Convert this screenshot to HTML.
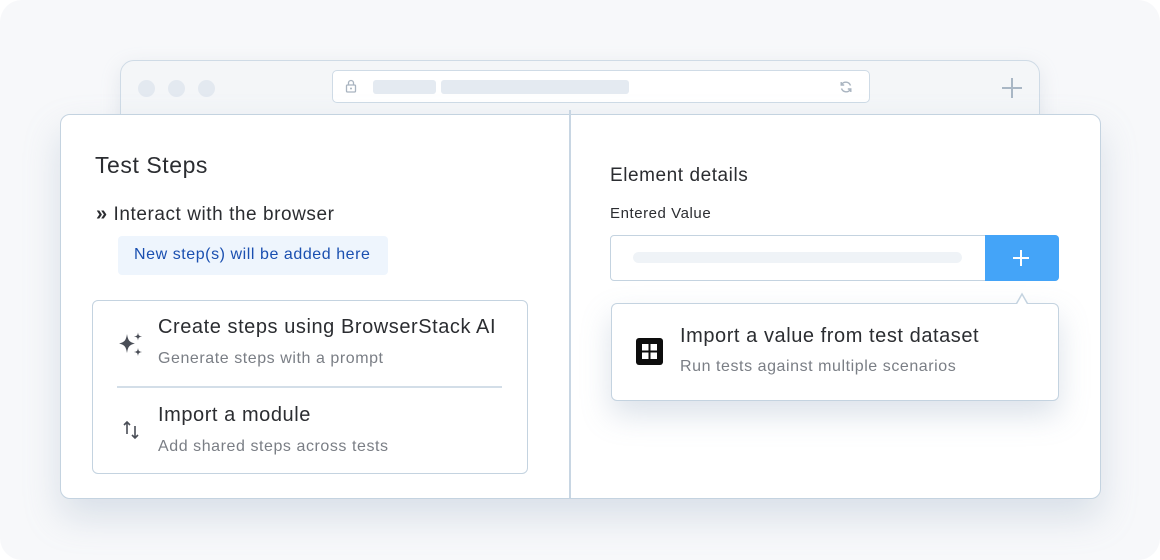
<!DOCTYPE html>
<html><head><style>
*{margin:0;padding:0;box-sizing:border-box}
body{width:1160px;height:560px;background:#fff;font-family:"Liberation Sans",sans-serif;overflow:hidden;position:relative;letter-spacing:0.035em}
.bg{position:absolute;left:0;top:0;width:1160px;height:560px;background:#f7f8fa;border-radius:22px}
.frame{position:absolute;left:120px;top:60px;width:920px;height:80px;background:#f4f6f8;border:1.5px solid #cfdbe6;border-radius:14px;box-shadow:0 6px 20px rgba(150,165,185,.2)}
.dot{position:absolute;top:19px;width:17px;height:17px;border-radius:50%;background:#e3e9f0}
.url{position:absolute;left:211px;top:9px;width:538px;height:33px;background:#fff;border:1.5px solid #cfdbe6;border-radius:5px}
.bar{position:absolute;top:9px;height:14px;background:#e4eaf1;border-radius:3px}
.card{position:absolute;left:60px;top:114px;width:1041px;height:385px;background:#fff;border:1.5px solid #c4d3e0;border-radius:10px;box-shadow:0 18px 36px rgba(140,160,185,.28)}
.div{position:absolute;left:569px;top:110px;width:1.5px;height:388px;background:#c8d6e3}
.t{position:absolute;color:#2b2d31;white-space:nowrap}
.s{position:absolute;color:#7a7e85;white-space:nowrap;font-size:16px}
</style></head><body>
<div class="bg"></div>
<div class="frame">
 <div class="dot" style="left:17px"></div><div class="dot" style="left:47px"></div><div class="dot" style="left:77px"></div>
 <div class="url">
  <svg style="position:absolute;left:12px;top:8px" width="12" height="14" viewBox="0 0 12 14"><rect x="1.5" y="6" width="9" height="7" rx="1" fill="none" stroke="#a9b4c0" stroke-width="1.3"/><path d="M3.5 6V4a2.5 2.5 0 0 1 5 0v2" fill="none" stroke="#a9b4c0" stroke-width="1.3"/><circle cx="6" cy="9.5" r="1" fill="#a9b4c0"/></svg>
  <div class="bar" style="left:40px;width:63px"></div><div class="bar" style="left:108px;width:188px"></div>
  <svg style="position:absolute;left:506px;top:9px" width="14" height="14" viewBox="0 0 14 14"><path d="M11.5 5.5A5 5 0 0 0 2.6 4.5M2.5 8.5a5 5 0 0 0 8.9 1" fill="none" stroke="#a9b4c0" stroke-width="1.4"/><path d="M2.2 2v3h3M11.8 12V9h-3" fill="none" stroke="#a9b4c0" stroke-width="1.4"/></svg>
 </div>
 <svg style="position:absolute;left:880px;top:16px" width="22" height="22" viewBox="0 0 22 22"><path d="M11 1v20M1 11h20" stroke="#a9b7c5" stroke-width="2"/></svg>
</div>
<div class="card"></div>
<div class="div"></div>

<div class="t" style="left:95px;top:152px;font-size:23px">Test Steps</div>
<div class="t" style="left:96px;top:203px;font-size:19px"><b style="font-size:20px">»</b>&nbsp;Interact with the browser</div>
<div style="position:absolute;left:118px;top:236px;width:270px;height:39px;background:#eef5fd;border-radius:4px;color:#1a4fb0;font-size:16px;padding:10px 0 0 16px;white-space:nowrap">New step(s) will be added here</div>
<div style="position:absolute;left:92px;top:300px;width:436px;height:174px;border:1.5px solid #c4d3e0;border-radius:6px;background:#fff"></div>
<div style="position:absolute;left:117px;top:386px;width:385px;height:1.5px;background:#d3dee8"></div>
<svg style="position:absolute;left:118px;top:331px" width="28" height="28" viewBox="0 0 28 28" fill="#4a4e57"><path d="M9 3C10 9 11 11 17 12.5 11 14 10 16 9 22 8 16 7 14 1 12.5 7 11 8 9 9 3Z"/><path d="M20 1.5C20.5 4.5 21 5 24 5.5 21 6 20.5 6.5 20 9.5 19.5 6.5 19 6 16 5.5 19 5 19.5 4.5 20 1.5Z"/><path d="M20 17C20.5 20 21 20.5 24 21 21 21.5 20.5 22 20 25 19.5 22 19 21.5 16 21 19 20.5 19.5 20 20 17Z"/></svg>
<div class="t" style="left:158px;top:316px;font-size:20px">Create steps using BrowserStack AI</div>
<div class="s" style="left:158px;top:350px">Generate steps with a prompt</div>
<svg style="position:absolute;left:122px;top:420px" width="18" height="20" viewBox="0 0 18 20" fill="none" stroke="#4a4e57" stroke-width="1.6"><path d="M5 14V2M2 5l3-3 3 3M13 6v12M10 15l3 3 3-3"/></svg>
<div class="t" style="left:158px;top:404px;font-size:20px">Import a module</div>
<div class="s" style="left:158px;top:438px">Add shared steps across tests</div>

<div class="t" style="left:610px;top:165px;font-size:19px">Element details</div>
<div class="t" style="left:610px;top:205px;font-size:15px">Entered Value</div>
<div style="position:absolute;left:610px;top:235px;width:449px;height:46px;border:1.5px solid #c4d3e0;border-radius:4px;background:#fff"></div>
<div style="position:absolute;left:633px;top:252px;width:329px;height:11px;background:#eff3f7;border-radius:6px"></div>
<div style="position:absolute;left:985px;top:235px;width:74px;height:46px;background:#44a4f8;border-radius:0 4px 4px 0"></div>
<svg style="position:absolute;left:1012px;top:249px" width="18" height="18" viewBox="0 0 18 18"><path d="M9 1v16M1 9h16" stroke="#fff" stroke-width="2"/></svg>
<div style="position:absolute;left:611px;top:303px;width:448px;height:98px;border:1.5px solid #c4d3e0;border-radius:6px;background:#fff;box-shadow:0 14px 30px rgba(140,160,185,.3)"></div>
<svg style="position:absolute;left:1011px;top:292px" width="22" height="13" viewBox="0 0 22 13"><path d="M0 12.5H5L11 2 17 12.5H22" fill="#fff" stroke="#c4d3e0" stroke-width="1.5"/><rect x="0" y="12" width="22" height="2" fill="#fff"/></svg>
<svg style="position:absolute;left:636px;top:338px" width="27" height="27" viewBox="0 0 27 27"><rect width="27" height="27" rx="3" fill="#0d0d0d"/><rect x="6" y="6" width="6.5" height="6.5" fill="#fff"/><rect x="14.5" y="6" width="6.5" height="6.5" fill="#fff"/><rect x="6" y="14.5" width="6.5" height="6.5" fill="#fff"/><rect x="14.5" y="14.5" width="6.5" height="6.5" fill="#fff"/></svg>
<div class="t" style="left:680px;top:325px;font-size:20px">Import a value from test dataset</div>
<div class="s" style="left:680px;top:358px">Run tests against multiple scenarios</div>
</body></html>
